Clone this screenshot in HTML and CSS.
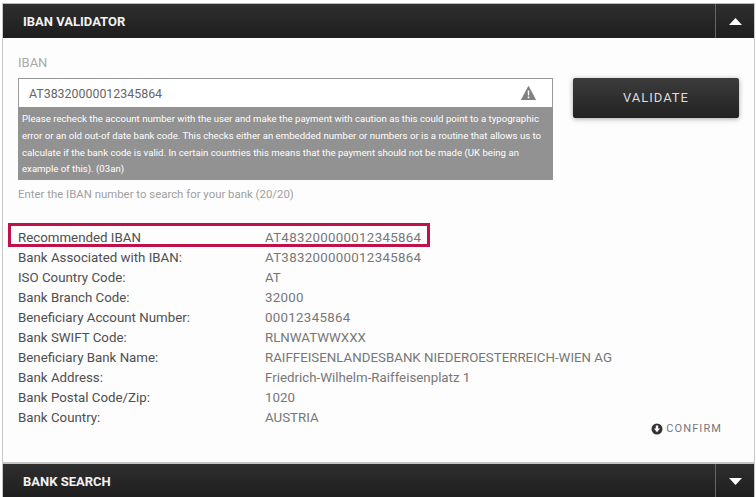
FILE: index.html
```html
<!DOCTYPE html>
<html>
<head>
<meta charset="utf-8">
<title>IBAN Validator</title>
<link rel="stylesheet" href="styles.css">
</head>
<body>
<div class="panel">
	<div class="bar">
		<h2>IBAN VALIDATOR</h2>
		<span class="toggle"><svg width="13" height="7" viewBox="0 0 13 7"><path d="M6.5 0L13 7H0z" fill="#fff"/></svg></span>
	</div>
	<div class="content">
		<div class="form">
			<div class="field">
				<label class="field-label">IBAN</label>
				<div class="input">
					<span>AT38320000012345864</span>
					<svg width="15" height="14" viewBox="0 0 15 14"><path d="M7.5 0.5L14.6 14H0.4z" fill="#808080" stroke="#808080" stroke-linejoin="round"/><path d="M6.7 4.5h1.6l-.2 5h-1.2zM6.7 10.5h1.6v1.7H6.7z" fill="#fff"/></svg>
				</div>
				<div class="warning">Please recheck the account number with the user and make the payment with caution as this could point to a typographic error or an old out-of date bank code. This checks either an embedded number or numbers or is a routine that allows us to calculate if the bank code is valid. In certain countries this means that the payment should not be made (UK being an example of this). (03an)</div>
				<p class="hint">Enter the IBAN number to search for your bank (20/20)</p>
			</div>
			<a class="validate">VALIDATE</a>
		</div>
		<div class="results">
			<div class="row recommended"><span class="key">Recommended IBAN</span><span class="val num">AT483200000012345864</span></div>
			<div class="row"><span class="key">Bank Associated with IBAN:</span><span class="val num">AT383200000012345864</span></div>
			<div class="row"><span class="key">ISO Country Code:</span><span class="val">AT</span></div>
			<div class="row"><span class="key">Bank Branch Code:</span><span class="val num">32000</span></div>
			<div class="row"><span class="key">Beneficiary Account Number:</span><span class="val num">00012345864</span></div>
			<div class="row"><span class="key">Bank SWIFT Code:</span><span class="val">RLNWATWWXXX</span></div>
			<div class="row"><span class="key">Beneficiary Bank Name:</span><span class="val">RAIFFEISENLANDESBANK NIEDEROESTERREICH-WIEN AG</span></div>
			<div class="row"><span class="key">Bank Address:</span><span class="val">Friedrich-Wilhelm-Raiffeisenplatz 1</span></div>
			<div class="row"><span class="key">Bank Postal Code/Zip:</span><span class="val">1020</span></div>
			<div class="row"><span class="key">Bank Country:</span><span class="val">AUSTRIA</span></div>
		</div>
		<div class="confirm">
			<svg width="12" height="12" viewBox="0 0 12 12"><circle cx="6" cy="6" r="5.5" fill="#333"/><path d="M4.8 2.6h2.4v3h1.9L6 9.3 2.9 5.6h1.9z" fill="#fff"/></svg>
			<span>CONFIRM</span>
		</div>
	</div>
	<div class="bar">
		<h2>BANK SEARCH</h2>
		<span class="toggle"><svg width="13" height="7" viewBox="0 0 13 7"><path d="M0 0H13L6.5 7z" fill="#fff"/></svg></span>
	</div>
</div>
</body>
</html>
```

FILE: styles.css
```css
*{margin:0;padding:0;box-sizing:border-box;}
html,body{height:497px;overflow:hidden;}
body{padding-top:3px;background:#fff;font-family:"Roboto","Liberation Sans",sans-serif;}
.panel{width:753px;margin-left:2px;border-left:1px solid #c8c8c8;border-right:1px solid #c8c8c8;border-top:1px solid #bbb;background:#fdfdfd;}
.bar{height:34px;display:flex;align-items:center;justify-content:space-between;background:linear-gradient(#2f2f2f,#1e1e1e);}
.bar h2{padding-left:20px;font-size:13px;font-weight:700;color:#f2f2f2;}
.toggle{width:39px;height:34px;display:flex;align-items:center;justify-content:center;border-left:1px solid #666;}
.content{height:426px;border-bottom:2px solid #c4c4c4;}
.form{display:flex;padding:0 15px 0 15px;}
.field{width:535px;}
.field-label{display:block;height:40px;padding-top:17px;font-size:13px;color:#aaa;}
.input{height:29px;display:flex;align-items:center;justify-content:space-between;padding:0 16px 0 10px;border:1px solid #999;border-bottom:0;background:#fff;font-size:12.4px;color:#666;}
.warning{height:73px;padding:4px 4px 0;background:#929292;color:#fff;font-size:9.65px;line-height:16.8px;}
.hint{padding-top:6px;font-size:11.4px;line-height:16px;color:#a0a0a0;}
.validate{display:block;width:166px;height:40px;margin:40px 0 0 20px;border-radius:2px;background:linear-gradient(#3c3c3c,#222);box-shadow:0 1px 5px rgba(0,0,0,.35);color:#ddd;font-size:13px;line-height:40px;letter-spacing:1px;text-align:center;}
.results{margin-top:25px;padding-left:15px;}
.row{display:flex;height:20px;align-items:center;font-size:13.3px;}
.key{width:247px;color:#4f4f4f;}
.val{color:#777;}
.num{letter-spacing:.3px;}
.recommended{position:relative;}
.recommended::before{content:"";box-sizing:border-box;position:absolute;left:-10px;top:-4px;width:422px;height:24px;border:3px solid #be1248;}
.confirm{display:flex;align-items:center;justify-content:flex-end;gap:3px;margin:-5px 32px 0 0;font-size:11px;letter-spacing:1.1px;color:#777;}
```
